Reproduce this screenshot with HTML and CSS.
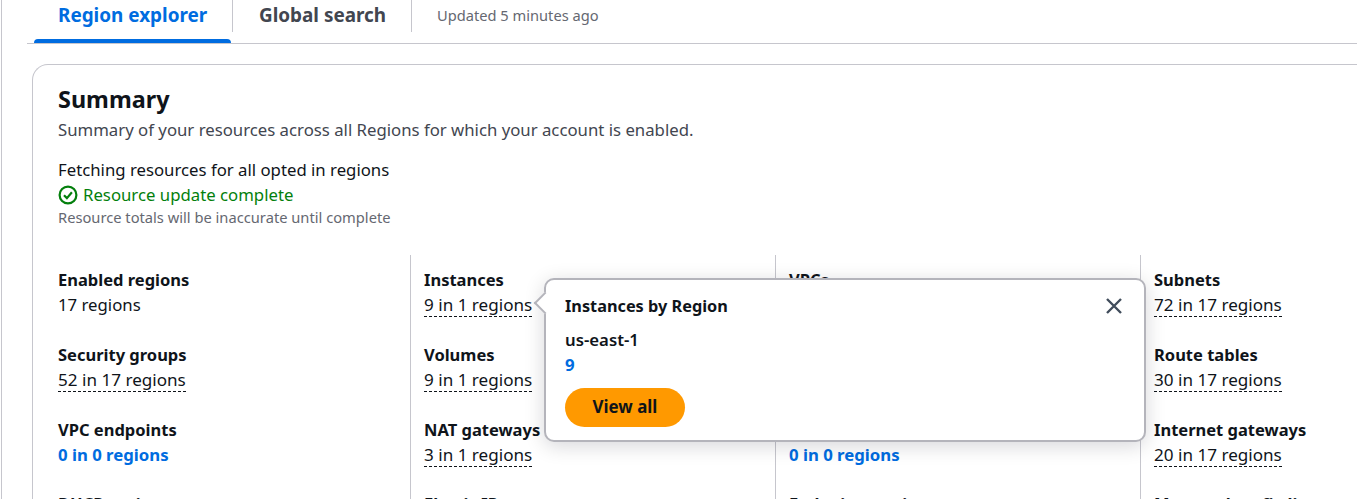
FILE: index.html
```html
<!DOCTYPE html>
<html lang="en">
<head>
  <meta charset="UTF-8">
  <meta name="viewport" content="width=device-width, initial-scale=1.0">
  <title>Resource Explorer</title>
  <link rel="stylesheet" href="styles.css">
</head>
<body>
  <main class="page">
    <nav class="tabs">
      <a class="tab active">Region explorer</a>
      <a class="tab">Global search</a>
      <span class="updated">Updated 5 minutes ago</span>
    </nav>

    <section class="card">
      <h2>Summary</h2>
      <p class="desc">Summary of your resources across all Regions for which your account is enabled.</p>

      <div class="status">
        <div>Fetching resources for all opted in regions</div>
        <div class="ok">
          <svg width="20" height="20" viewBox="0 0 20 20" fill="none" stroke="#037f0c" stroke-width="2.2">
            <circle cx="10" cy="10" r="8.4"/>
            <path d="M6 10.2l2.9 2.9 5-5.8"/>
          </svg>
          Resource update complete
        </div>
        <small>Resource totals will be inaccurate until complete</small>
      </div>

      <div class="grid">
        <div class="col">
          <div class="item"><b>Enabled regions</b><span>17 regions</span></div>
          <div class="item"><b>Security groups</b><a class="dash">52 in 17 regions</a></div>
          <div class="item"><b>VPC endpoints</b><a class="link">0 in 0 regions</a></div>
          <div class="item"><b>DHCP option sets</b><a class="dash">17 in 17 regions</a></div>
        </div>
        <div class="col">
          <div class="item"><b>Instances</b><a class="dash">9 in 1 regions</a></div>
          <div class="item"><b>Volumes</b><a class="dash">9 in 1 regions</a></div>
          <div class="item"><b>NAT gateways</b><a class="dash">3 in 1 regions</a></div>
          <div class="item"><b>Elastic IPs</b><a class="dash">3 in 1 regions</a></div>
        </div>
        <div class="col">
          <div class="item"><b>VPCs</b><a class="dash">20 in 17 regions</a></div>
          <div class="item"><b>Network ACLs</b><a class="dash">20 in 17 regions</a></div>
          <div class="item"><b>Egress-only gateways</b><a class="link">0 in 0 regions</a></div>
          <div class="item"><b>Endpoint services</b><a class="link">0 in 0 regions</a></div>
        </div>
        <div class="col">
          <div class="item"><b>Subnets</b><a class="dash">72 in 17 regions</a></div>
          <div class="item"><b>Route tables</b><a class="dash">30 in 17 regions</a></div>
          <div class="item"><b>Internet gateways</b><a class="dash">20 in 17 regions</a></div>
          <div class="item"><b>Managed prefix lists</b><a class="dash">51 in 17 regions</a></div>
        </div>
      </div>
    </section>
  </main>

  <div class="popover">
    <span class="arrow"></span>
    <div class="pop-head">
      <b>Instances by Region</b>
      <svg width="20" height="20" viewBox="0 0 20 20" fill="none" stroke="#414d5c" stroke-width="2.4">
        <path d="M3 3l14 14M17 3L3 17"/>
      </svg>
    </div>
    <div class="pop-region">us-east-1</div>
    <a class="link">9</a>
    <button class="btn">View all</button>
  </div>
</body>
</html>
```

FILE: styles.css
```css
html, body { height: 100%; }
body { margin: 0; background: #fff; color: #0f141a; font-family: "Noto Sans", Arial, sans-serif; font-size: 16.75px; line-height: 25px; overflow: hidden; }
.page { margin-left: 1px; border-left: 1px solid #c6c6cd; padding-left: 25px; height: 100%; overflow: hidden; }

.tabs { display: flex; align-items: flex-start; height: 43px; border-bottom: 1px solid #c6c6cd; }
.tab { height: 32px; padding: 0 25px 0 26px; font-size: 18.9px; font-weight: 700; line-height: 30px; color: #424650; border-right: 1px solid #c6c6cd; position: relative; }
.tab.active { color: #006ce0; width: 199px; padding: 0 0 0 24px; margin-left: 7px; box-sizing: border-box; }
.tab.active::after { content: ""; position: absolute; left: 0; right: 1px; top: 39px; height: 4px; background: #006ce0; border-radius: 4px 4px 0 0; }
.updated { padding-left: 25px; font-size: 14.65px; line-height: 31px; color: #656871; }

.card { margin: 20px 0 0 5px; padding: 19px 25px 20px; border: 1px solid #c6c6cd; border-radius: 16px 0 0 0; border-right: 0; }
h2 { margin: 0; font-size: 23.4px; line-height: 30px; font-weight: 700; }
.desc { margin: 3px 0 0; color: #424650; }
.status { margin-top: 15px; }
.ok { display: flex; align-items: center; gap: 5px; color: #037f0c; }
small { display: block; font-size: 14.7px; line-height: 20px; color: #656871; }

.grid { display: grid; grid-template-columns: 352px repeat(3, 365px); margin-top: 28px; }
.col { padding-left: 13px; border-left: 1px solid #c6c6cd; }
.col:first-child { padding-left: 0; border-left: 0; }
.item { height: 75px; padding-top: 12px; box-sizing: border-box; }
.item:last-child { margin-top: -1px; }
.item b { display: block; font-size: 16.5px; font-weight: 700; }
.item a, .item span { display: inline-block; line-height: 22px; }
.dash { font-size: 17.1px; border-bottom: 1px dashed #0f141a; }
.link { color: #006ce0; font-weight: 700; }

.popover { position: absolute; left: 544px; top: 278px; width: 602px; height: 164px; box-sizing: border-box; padding: 13px 19px; background: #fff; border: 2px solid #b4b4bb; border-radius: 10px; box-shadow: 0 4px 20px rgba(0,7,22,.16); }
.arrow { position: absolute; left: -9px; top: 15px; width: 14px; height: 14px; background: #fff; border-left: 2px solid #b4b4bb; border-bottom: 2px solid #b4b4bb; transform: rotate(45deg); }
.pop-head { display: flex; justify-content: space-between; align-items: center; padding-right: 1px; }
.pop-head b { font-size: 16.3px; padding-top: 1px; }
.pop-region { margin-top: 8px; font-weight: 600; }
.popover .link { display: block; }
.btn { display: block; margin-top: 11px; width: 120px; height: 39px; padding: 0 0 2px; border: 0; border-radius: 20px; background: #ff9900; color: #0f141a; font: 700 16.9px "Noto Sans", Arial, sans-serif; }
```
